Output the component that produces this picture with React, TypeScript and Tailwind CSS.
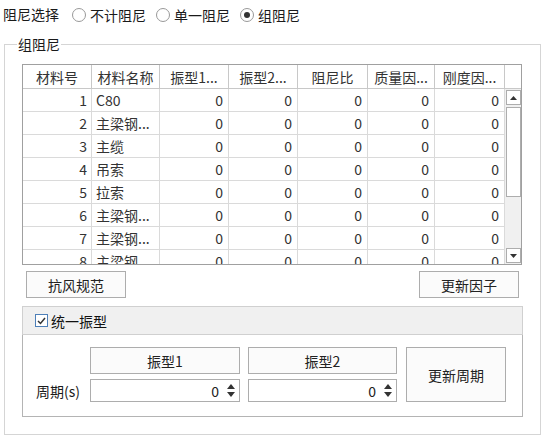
import React from "react";

const FONT = '"Noto Sans CJK SC", "Noto Sans", sans-serif';

const cols = [69, 68, 69, 69, 70, 67, 70];
const headers = ["材料号", "材料名称", "振型1...", "振型2...", "阻尼比", "质量因...", "刚度因..."];
const rows: [string, string][] = [
  ["1", "C80"],
  ["2", "主梁钢..."],
  ["3", "主缆"],
  ["4", "吊索"],
  ["5", "拉索"],
  ["6", "主梁钢..."],
  ["7", "主梁钢..."],
  ["8", "主梁钢"],
];

const Radio = ({ checked, label }: { checked?: boolean; label: string }) => (
  <label className="flex items-center gap-[4px]">
    <span className="w-[14px] h-[14px] rounded-full border border-[#999] bg-white flex items-center justify-center">
      {checked && <span className="w-[6px] h-[6px] rounded-full bg-[#333]" />}
    </span>
    <span>{label}</span>
  </label>
);

const Button = ({ text, className }: { text: string; className?: string }) => (
  <button
    type="button"
    className={`border border-[#adadad] bg-[#fbfbfb] text-[#222] flex items-center justify-center ${className ?? ""}`}
  >
    {text}
  </button>
);

const SpinBox = ({ value }: { value: string }) => (
  <div className="h-[23px] border border-[#adadad] bg-white flex items-center justify-end pr-[4px]">
    <span className="text-[#222]">{value}</span>
    <span className="ml-[8px] flex flex-col items-center gap-[3px]">
      <svg width="8" height="5" viewBox="0 0 8 5">
        <path d="M0 5 L4 0 L8 5 Z" fill="#333" />
      </svg>
      <svg width="8" height="5" viewBox="0 0 8 5">
        <path d="M0 0 L4 5 L8 0 Z" fill="#333" />
      </svg>
    </span>
  </div>
);

const App = () => {
  return (
    <div
      className="w-[547px] h-[442px] bg-white text-[14px] leading-[20px] text-[#1a1a1a] overflow-hidden"
      style={{ fontFamily: FONT }}
    >
      {/* damping choice */}
      <div className="h-[34px] pl-[3px] pt-[4px] flex items-start gap-[13px]">
        <span>阻尼选择</span>
        <div className="flex items-center gap-[10px] h-[20px] mt-[1px]">
          <Radio label="不计阻尼" />
          <Radio label="单一阻尼" />
          <Radio checked label="组阻尼" />
        </div>
      </div>

      <fieldset className="ml-[4px] w-[536px] h-[401px] border border-[#d5d5d5] pl-[17px] pr-[17px] pt-0">
        <legend className="-ml-[5px] px-[1px] -mt-[1px]">组阻尼</legend>

        {/* table */}
        <div className="mt-[10px] w-[500px] h-[201px] border border-[#a0a0a0] bg-white flex flex-col text-[#333]">
          <div className="flex h-[24px] border-b border-[#c8c8c8]">
            {headers.map((h, i) => (
              <div
                key={h}
                style={{ width: cols[i] }}
                className="border-r border-[#c8c8c8] flex items-center justify-center"
              >
                {h}
              </div>
            ))}
            <div className="w-[16px]" />
          </div>
          <div className="flex flex-1 overflow-hidden">
            <div className="w-[482px] overflow-hidden">
              {rows.map(([n, name]) => (
                <div key={n} className="flex h-[23px] border-b border-[#dadada]">
                  <div style={{ width: cols[0] }} className="border-r border-[#dadada] text-right pr-[4px] leading-[22px]">
                    {n}
                  </div>
                  <div style={{ width: cols[1] }} className="border-r border-[#dadada] pl-[4px] leading-[22px]">
                    {name}
                  </div>
                  {cols.slice(2).map((w, i) => (
                    <div
                      key={i}
                      style={{ width: w }}
                      className="border-r border-[#dadada] text-right pr-[5px] leading-[22px]"
                    >
                      0
                    </div>
                  ))}
                </div>
              ))}
            </div>
            {/* scrollbar */}
            <div className="w-[16px] bg-[#f0f0f0] flex flex-col items-center pt-[1px] pb-[1px]">
              <div className="w-[15px] h-[15px] border border-[#adadad] bg-white flex items-center justify-center">
                <svg width="7" height="4" viewBox="0 0 7 4">
                  <path d="M0 4 L3.5 0 L7 4 Z" fill="#333" />
                </svg>
              </div>
              <div className="w-[15px] h-[90px] mt-[2px] border border-[#adadad] bg-white" />
              <div className="flex-1" />
              <div className="w-[15px] h-[15px] border border-[#adadad] bg-white flex items-center justify-center">
                <svg width="7" height="4" viewBox="0 0 7 4">
                  <path d="M0 0 L3.5 4 L7 0 Z" fill="#333" />
                </svg>
              </div>
            </div>
          </div>
        </div>

        {/* buttons */}
        <div className="w-[500px] mt-[6px] flex justify-between pl-[4px] pr-[3px]">
          <Button text="抗风规范" className="w-[100px] h-[27px]" />
          <Button text="更新因子" className="w-[100px] h-[27px]" />
        </div>

        {/* unified mode group */}
        <div className="mt-[8px] w-[501px]">
          <div className="h-[29px] bg-[#f0f0f0] border border-[#d0d0d0] flex items-center pl-[12px] gap-[3px]">
            <span className="w-[13px] h-[13px] border border-[#4d7fb8] bg-white flex items-center justify-center">
              <svg width="9" height="8" viewBox="0 0 9 8">
                <path d="M1 4 L3.5 6.5 L8 1" stroke="#333" strokeWidth="1.5" fill="none" />
              </svg>
            </span>
            <span className="text-[#111]">统一振型</span>
          </div>
          <div className="h-[82px] border border-t-0 border-[#b4b4b4] flex pt-[12px]">
            <div className="w-[67px] pl-[13px] flex items-end pb-[15px]">周期(s)</div>
            <div className="w-[150px] flex flex-col gap-[5px]">
              <Button text="振型1" className="h-[27px]" />
              <SpinBox value="0" />
            </div>
            <div className="w-[149px] ml-[8px] flex flex-col gap-[5px]">
              <Button text="振型2" className="h-[27px]" />
              <SpinBox value="0" />
            </div>
            <Button text="更新周期" className="w-[100px] h-[55px] ml-[9px]" />
          </div>
        </div>
      </fieldset>
    </div>
  );
};

export default App;
